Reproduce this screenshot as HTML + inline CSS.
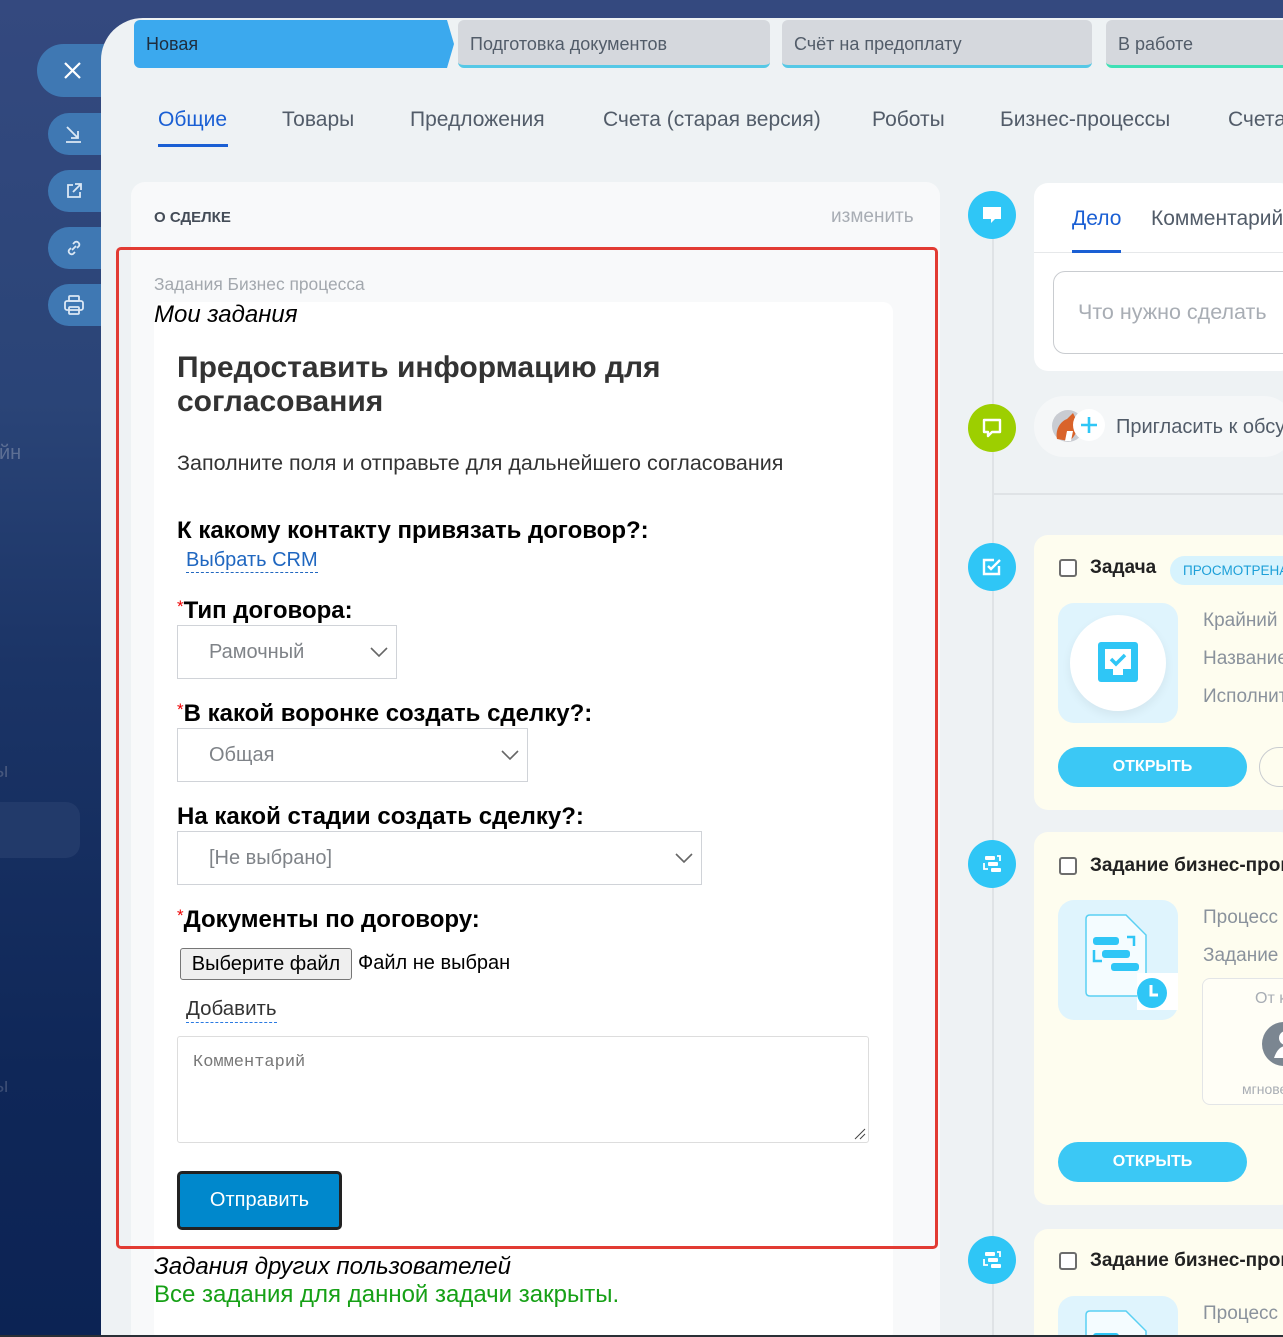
<!DOCTYPE html>
<html><head><meta charset="utf-8">
<style>
*{box-sizing:border-box;margin:0;padding:0}
html,body{width:1283px;height:1337px;overflow:hidden}
body{font-family:"Liberation Sans",Arial,sans-serif;background:#1b3466}
#w{position:relative;width:1283px;height:1337px;overflow:hidden}
.a{position:absolute}
.bg{left:0;top:0;width:1283px;height:1337px;background:linear-gradient(180deg,#34497f 0%,#2a4477 30%,#1b3466 50%,#0f2758 80%,#0c2354 100%)}
.lbtn{position:absolute;background:#3f78b3;border-radius:30px 0 0 30px}
.lbtn svg{position:absolute}
.main{left:101px;top:18px;width:1182px;height:1319px;background:#eef2f4;border-top-left-radius:42px}
.stage{position:absolute;top:20px;height:48px;background:#d5d8dd;font-size:18px;color:#525c69;line-height:48px;padding-left:12px;border-bottom:3px solid #55c8e6;border-radius:6px}
.tab{position:absolute;top:108px;font-size:21px;color:#525c69}
.lab{position:absolute;left:177px;font-size:24px;font-weight:bold;color:#000}
.lab b{color:#e00;font-size:17px;vertical-align:top;font-weight:normal}
.sel{position:absolute;left:177px;height:54px;border:1px solid #d0d3d8;background:#fff;font-size:20px;color:#7f8388;line-height:52px;padding-left:31px}
.sel svg{position:absolute;right:8px;top:19px}
.circ{position:absolute;left:968px;width:48px;height:48px;border-radius:50%;background:#2fc6f6}
.circ svg{position:absolute;left:12px;top:12px}
.card{position:absolute;left:1034px;width:260px;background:#fefdef;border-radius:14px}
.chk{position:absolute;width:18px;height:18px;border:2px solid #6d6d6d;border-radius:3px;background:#fff}
.ctit{position:absolute;font-size:19px;font-weight:bold;color:#222;white-space:nowrap}
.gtxt{position:absolute;font-size:19px;color:#8a929c;white-space:nowrap}
.ibox{position:absolute;width:120px;height:120px;background:#dff4fd;border-radius:16px}
.open{position:absolute;width:189px;height:40px;background:#3bc8f5;border-radius:20px;color:#fff;font-weight:bold;font-size:16px;text-align:center;line-height:40px}
</style></head><body><div id="w">
<div class="a bg"></div>
<div class="a" style="left:-46px;top:442px;font-size:20px;color:#5d6f94">Дизайн</div>
<div class="a" style="left:-6px;top:760px;font-size:20px;color:#46577d">ы</div>
<div class="a" style="left:0;top:802px;width:80px;height:56px;background:#223a6a;border-radius:0 14px 14px 0"></div>
<div class="a" style="left:-6px;top:1075px;font-size:20px;color:#3a4c74">ы</div>

<div class="lbtn" style="left:37px;top:44px;width:70px;height:53px"><svg style="left:26px;top:17px" width="19" height="19" viewBox="0 0 19 19"><path d="M2 2L17 17M17 2L2 17" stroke="#fff" stroke-width="2.2"/></svg></div>
<div class="lbtn" style="left:48px;top:113px;width:60px;height:42px"><svg style="left:16px;top:11px" width="20" height="20" viewBox="0 0 20 20" fill="none" stroke="#dbe8f5" stroke-width="1.8"><path d="M3 3L14 14M14 7V14H7M2 18H17"/></svg></div>
<div class="lbtn" style="left:48px;top:170px;width:60px;height:42px"><svg style="left:16px;top:11px" width="20" height="20" viewBox="0 0 20 20" fill="none" stroke="#dbe8f5" stroke-width="1.8"><path d="M9 4H4V16H16V11M11 3H17V9M17 3L9 11"/></svg></div>
<div class="lbtn" style="left:48px;top:227px;width:60px;height:42px"><svg style="left:16px;top:11px" width="20" height="20" viewBox="0 0 20 20" fill="none" stroke="#dbe8f5" stroke-width="1.8"><path d="M8 12L12 8M9 6l2-2a3 3 0 014 4l-2 2M11 14l-2 2a3 3 0 01-4-4l2-2"/></svg></div>
<div class="lbtn" style="left:48px;top:284px;width:60px;height:42px"><svg style="left:15px;top:10px" width="22" height="22" viewBox="0 0 22 22" fill="none" stroke="#dbe8f5" stroke-width="1.8"><rect x="6" y="2" width="10" height="5" rx="1"/><rect x="2" y="7" width="18" height="9" rx="2"/><rect x="6" y="13" width="10" height="7" rx="1"/></svg></div>

<div class="a main"></div>

<div class="stage" style="left:134px;width:312px;background:#3ba9ee;color:#1f2d3d;border-bottom:none;border-radius:6px 0 0 6px">Новая</div>
<svg class="a" style="left:444px;top:20px" width="10" height="48"><path d="M0 0L3 0L10 24L3 48L0 48Z" fill="#3ba9ee"/></svg>
<div class="stage" style="left:458px;width:312px">Подготовка документов</div>
<div class="stage" style="left:782px;width:310px">Счёт на предоплату</div>
<div class="stage" style="left:1106px;width:200px;border-bottom-color:#3fe0b5">В работе</div>

<div class="tab" style="left:158px;color:#1a5fd4">Общие</div>
<div class="a" style="left:158px;top:144px;width:70px;height:3px;background:#1a5fd4"></div>
<div class="tab" style="left:282px">Товары</div>
<div class="tab" style="left:410px">Предложения</div>
<div class="tab" style="left:603px">Счета (старая версия)</div>
<div class="tab" style="left:872px">Роботы</div>
<div class="tab" style="left:1000px">Бизнес-процессы</div>
<div class="tab" style="left:1228px">Счета</div>

<div class="a" style="left:131px;top:182px;width:809px;height:1170px;background:#f8f9fa;border-radius:14px 14px 0 0"></div>
<div class="a" style="left:154px;top:209px;font-size:15px;font-weight:bold;color:#444c57">О СДЕЛКЕ</div>
<div class="a" style="left:831px;top:206px;font-size:19px;color:#a8adb4">изменить</div>
<div class="a" style="left:154px;top:302px;width:739px;height:1040px;background:#fff;border-radius:10px"></div>
<div class="a" style="left:116px;top:247px;width:822px;height:1002px;border:3px solid #e23b33;border-radius:5px"></div>
<div class="a" style="left:154px;top:274px;font-size:17.4px;color:#a3a8ae">Задания Бизнес процесса</div>
<div class="a" style="left:154px;top:301px;font-size:24px;font-style:italic;color:#000">Мои задания</div>
<div class="a" style="left:177px;top:351px;font-size:30px;font-weight:bold;color:#333;line-height:34px;width:620px">Предоставить информацию для согласования</div>
<div class="a" style="left:177px;top:451px;font-size:21.5px;color:#333">Заполните поля и отправьте для дальнейшего согласования</div>
<div class="lab" style="top:517px">К какому контакту привязать договор?:</div>
<div class="a" style="left:186px;top:548px;font-size:20px;color:#2067c0;border-bottom:1px dashed #2067c0;line-height:24px">Выбрать CRM</div>
<div class="lab" style="top:597px"><b>*</b>Тип договора:</div>
<div class="sel" style="top:625px;width:220px">Рамочный<svg width="18" height="14"><path d="M1 3L9 11L17 3" fill="none" stroke="#666" stroke-width="1.6"/></svg></div>
<div class="lab" style="top:700px"><b>*</b>В какой воронке создать сделку?:</div>
<div class="sel" style="top:728px;width:351px">Общая<svg width="18" height="14"><path d="M1 3L9 11L17 3" fill="none" stroke="#666" stroke-width="1.6"/></svg></div>
<div class="lab" style="top:803px">На какой стадии создать сделку?:</div>
<div class="sel" style="top:831px;width:525px">[Не выбрано]<svg width="18" height="14"><path d="M1 3L9 11L17 3" fill="none" stroke="#666" stroke-width="1.6"/></svg></div>
<div class="lab" style="top:906px"><b>*</b>Документы по договору:</div>
<div class="a" style="left:180px;top:948px;width:172px;height:32px;background:#efefef;border:1px solid #767676;border-radius:3px;font-size:20px;color:#000;text-align:center;line-height:30px">Выберите файл</div>
<div class="a" style="left:358px;top:952px;font-size:20px;color:#000">Файл не выбран</div>
<div class="a" style="left:186px;top:996px;font-size:20.5px;color:#333;border-bottom:1px dashed #2a7ae2;line-height:26px">Добавить</div>
<div class="a" style="left:177px;top:1036px;width:692px;height:107px;border:1px solid #ddd;border-radius:3px;background:#fff"></div>
<div class="a" style="left:193px;top:1053px;font-size:17px;color:#777;font-family:'Liberation Mono','DejaVu Sans Mono',monospace">Комментарий</div>
<svg class="a" style="left:852px;top:1126px" width="14" height="14"><path d="M13 3L3 13M13 8L8 13" stroke="#444" stroke-width="1"/></svg>
<div class="a" style="left:177px;top:1171px;width:165px;height:59px;background:#0088cc;border:3px solid #222;border-radius:5px;color:#fff;font-size:20px;text-align:center;line-height:53px">Отправить</div>
<div class="a" style="left:154px;top:1253px;font-size:24px;font-style:italic;color:#000">Задания других пользователей</div>
<div class="a" style="left:154px;top:1281px;font-size:24px;color:#16a016">Все задания для данной задачи закрыты.</div>

<div class="a" style="left:992px;top:215px;width:2px;height:1130px;background:#dfe3e6"></div>
<div class="a" style="left:993px;top:493px;width:290px;height:2px;background:#dfe3e6"></div>
<div class="circ" style="top:191px"><svg width="24" height="24" viewBox="0 0 24 24"><path d="M3 4H21V16H15L11 20V16H3Z" fill="#fff"/></svg></div>
<div class="circ" style="top:404px;background:#9dcf00"><svg width="24" height="24" viewBox="0 0 24 24"><path d="M4 4H20V16H12L8 20V16H4Z" fill="none" stroke="#fff" stroke-width="2.4" stroke-linejoin="round"/></svg></div>
<div class="circ" style="top:543px"><svg width="24" height="24" viewBox="0 0 24 24" fill="none" stroke="#fff" stroke-width="2.4"><path d="M19 11V19H4V5H14"/><path d="M8 11L11 14L20 5"/></svg></div>
<div class="circ" style="top:840px"><svg width="24" height="24" viewBox="0 0 24 24"><rect x="5" y="4" width="10" height="4" rx="1" fill="#fff"/><rect x="8" y="10" width="10" height="4" rx="1" fill="#fff"/><rect x="11" y="16" width="10" height="4" rx="1" fill="#fff"/><path d="M4 11V17H8M17 4H20V9" fill="none" stroke="#fff" stroke-width="1.8"/></svg></div>
<div class="circ" style="top:1236px"><svg width="24" height="24" viewBox="0 0 24 24"><rect x="5" y="4" width="10" height="4" rx="1" fill="#fff"/><rect x="8" y="10" width="10" height="4" rx="1" fill="#fff"/><rect x="11" y="16" width="10" height="4" rx="1" fill="#fff"/><path d="M4 11V17H8M17 4H20V9" fill="none" stroke="#fff" stroke-width="1.8"/></svg></div>

<div class="a" style="left:1034px;top:183px;width:260px;height:188px;background:#fff;border-radius:14px"></div>
<div class="a" style="left:1072px;top:207px;font-size:21px;color:#1a5fd4">Дело</div>
<div class="a" style="left:1151px;top:207px;font-size:21px;color:#525c69;white-space:nowrap">Комментарий</div>
<div class="a" style="left:1034px;top:252px;width:260px;height:1px;background:#e6e8ea"></div>
<div class="a" style="left:1072px;top:250px;width:49px;height:3px;background:#1a5fd4"></div>
<div class="a" style="left:1053px;top:271px;width:250px;height:83px;border:1px solid #c9ccd0;border-radius:12px"></div>
<div class="a" style="left:1078px;top:300px;font-size:21.5px;color:#a8adb4;white-space:nowrap">Что нужно сделать</div>

<div class="a" style="left:1034px;top:396px;width:260px;height:61px;background:#f5f7f8;border-radius:30px"></div>
<svg class="a" style="left:1051px;top:409px" width="34" height="34"><circle cx="17" cy="17" r="16" fill="#c9ccd2"/><path d="M6 30C4 20 10 12 16 10L22 4L26 12C28 20 24 28 18 32Z" fill="#d9632a"/><path d="M16 22L22 22L20 32L14 32Z" fill="#fff"/></svg>
<div class="a" style="left:1073px;top:409px;width:32px;height:32px;border-radius:50%;background:#fff"></div>
<svg class="a" style="left:1080px;top:416px" width="18" height="18"><path d="M9 1V17M1 9H17" stroke="#2fc6f6" stroke-width="2.6"/></svg>
<div class="a" style="left:1116px;top:416px;font-size:20px;color:#525c69;white-space:nowrap">Пригласить к обсуждению</div>

<div class="card" style="top:535px;height:275px"></div>
<div class="chk" style="left:1059px;top:559px"></div>
<div class="ctit" style="left:1090px;top:557px">Задача</div>
<div class="a" style="left:1170px;top:556px;width:130px;height:29px;background:#d7f3fd;border-radius:15px;color:#1c9fd8;font-size:13.5px;line-height:29px;padding-left:13px">ПРОСМОТРЕНА</div>
<div class="ibox" style="left:1058px;top:603px"></div>
<div class="a" style="left:1070px;top:615px;width:96px;height:96px;border-radius:50%;background:#fff;box-shadow:0 4px 10px rgba(0,0,0,.06)"></div>
<svg class="a" style="left:1098px;top:642px" width="40" height="40" viewBox="0 0 40 40"><rect x="0" y="0" width="40" height="40" rx="3" fill="#2fc6f6"/><path d="M7 7H33V27H25V33H15V27H7Z" fill="#fff"/><path d="M13 17L18 22L27 13" fill="none" stroke="#2fc6f6" stroke-width="3.5"/></svg>
<div class="gtxt" style="left:1203px;top:610px">Крайний срок</div>
<div class="gtxt" style="left:1203px;top:648px">Название</div>
<div class="gtxt" style="left:1203px;top:686px">Исполнитель</div>
<div class="open" style="left:1058px;top:747px">ОТКРЫТЬ</div>
<div class="a" style="left:1259px;top:747px;width:80px;height:40px;border:1px solid #c9ccd0;border-radius:20px"></div>

<div class="card" style="top:832px;height:373px"></div>
<div class="chk" style="left:1059px;top:857px"></div>
<div class="ctit" style="left:1090px;top:855px">Задание бизнес-процесса</div>
<div class="ibox" style="left:1058px;top:900px"></div>
<svg class="a" style="left:1082px;top:914px" width="96" height="96" viewBox="0 0 96 96"><path d="M4 5Q4 1 8 1H44L64 21V78Q64 82 60 82H8Q4 82 4 78Z" fill="#f4fcff" stroke="#5ad0f3" stroke-width="1.5"/><rect x="11" y="23" width="26" height="8" rx="3" fill="#2fc6f6"/><rect x="20" y="36" width="28" height="8" rx="3" fill="#2fc6f6"/><rect x="29" y="49" width="28" height="8" rx="3" fill="#2fc6f6"/><path d="M12 36V47H20M45 23H52V32" fill="none" stroke="#2fc6f6" stroke-width="2.5"/><rect x="55" y="59" width="41" height="37" fill="#fff"/><circle cx="70" cy="79" r="15" fill="#2fc6f6"/><path d="M69 71V81H76" fill="none" stroke="#fff" stroke-width="3"/></svg>
<div class="gtxt" style="left:1203px;top:907px">Процесс</div>
<div class="gtxt" style="left:1203px;top:945px">Задание</div>
<div class="a" style="left:1202px;top:978px;width:100px;height:127px;border:1px solid #e3e5e7;border-radius:8px;background:#fffef6"></div>
<div class="a" style="left:1255px;top:990px;font-size:16px;color:#a8adb4;white-space:nowrap">От кого</div>
<div class="a" style="left:1262px;top:1022px;width:44px;height:44px;border-radius:50%;background:#7b8691"></div>
<svg class="a" style="left:1274px;top:1028px" width="10" height="32"><circle cx="12" cy="10" r="7" fill="#fff"/><path d="M0 30Q4 18 12 18V30Z" fill="#fff"/></svg>
<div class="a" style="left:1242px;top:1081px;font-size:14px;color:#a8adb4;white-space:nowrap">мгновенно</div>
<div class="open" style="left:1058px;top:1142px">ОТКРЫТЬ</div>

<div class="card" style="top:1229px;height:108px;border-radius:14px 14px 0 0"></div>
<div class="chk" style="left:1059px;top:1252px"></div>
<div class="ctit" style="left:1090px;top:1250px">Задание бизнес-процесса</div>
<div class="ibox" style="left:1058px;top:1296px;height:41px;border-radius:16px 16px 0 0"></div>
<svg class="a" style="left:1082px;top:1310px" width="70" height="27" viewBox="0 0 70 27"><path d="M4 5Q4 1 8 1H44L64 21V30H4Z" fill="#f4fcff" stroke="#5ad0f3" stroke-width="1.5"/><rect x="11" y="23" width="26" height="8" rx="3" fill="#2fc6f6"/></svg>
<div class="gtxt" style="left:1203px;top:1303px">Процесс</div>
<div class="a" style="left:0;top:1335px;width:1283px;height:2px;background:#2a2f36"></div>
</div></body></html>
